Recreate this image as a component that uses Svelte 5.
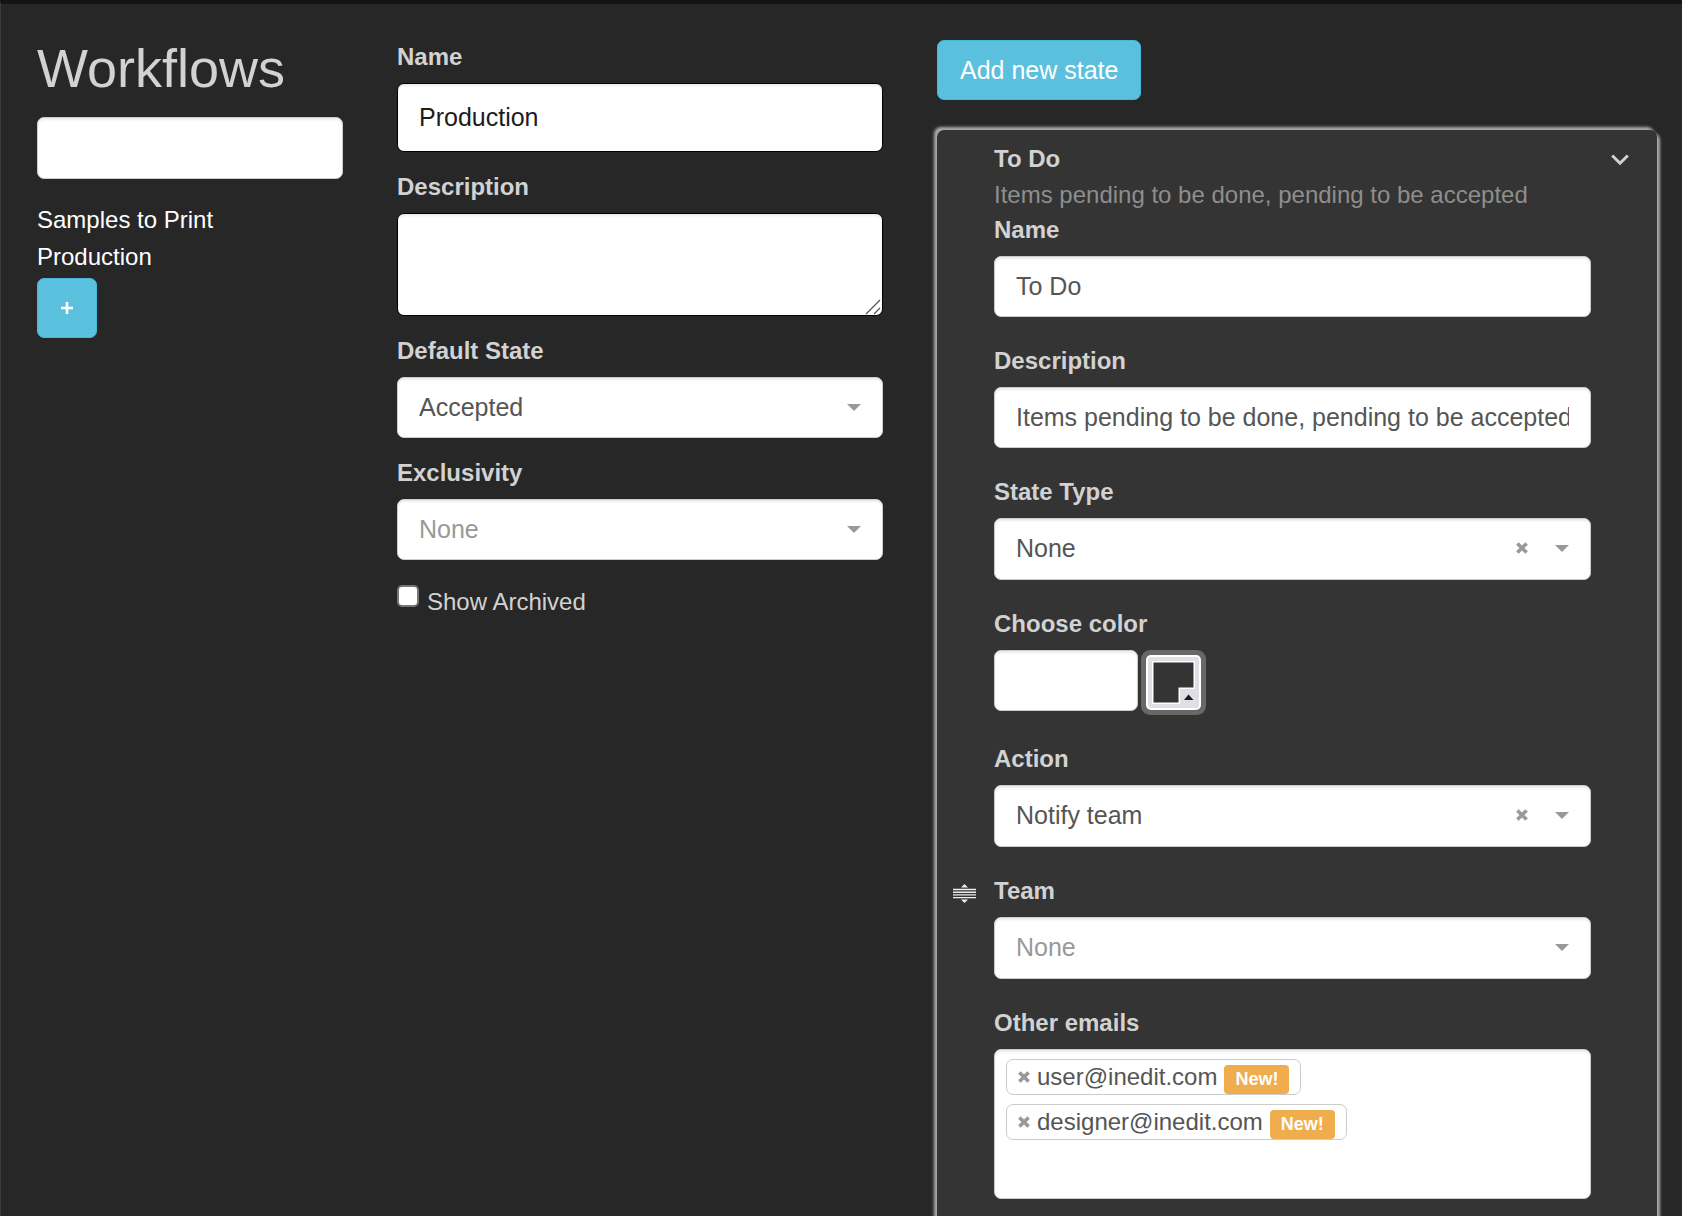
<script>
  let search = $state('');
  let workflows = ['Samples to Print', 'Production'];

  let workflow = $state({
    name: 'Production',
    description: '',
    defaultState: 'Accepted',
    exclusivity: '',
    showArchived: false
  });

  let item = $state({
    open: true,
    name: 'To Do',
    description: 'Items pending to be done, pending to be accepted',
    type: 'None',
    color: '',
    action: 'Notify team',
    team: '',
    emails: ['user@inedit.com', 'designer@inedit.com']
  });

  function removeEmail(email) {
    item.emails = item.emails.filter((e) => e !== email);
  }
</script>

{#snippet cross()}
  <svg class="cross" viewBox="0 0 12 12" aria-hidden="true">
    <path d="M1.400 1.400L10.600 10.600M10.600 1.400L1.400 10.600" stroke="currentColor" stroke-width="3.6" />
  </svg>
{/snippet}

{#snippet caret()}
  <svg class="caret" viewBox="0 0 14 7" aria-hidden="true">
    <path d="M0 0H14L7 7Z" fill="currentColor" />
  </svg>
{/snippet}

<div class="page">
  <aside>
    <h1>Workflows</h1>
    <input class="control" type="text" aria-label="Search workflows" bind:value={search} />
    <ul class="list">
      {#each workflows as name}
        <li><a href="#workflow">{name}</a></li>
      {/each}
    </ul>
    <button class="btn btn-add" aria-label="Add workflow">
      <svg viewBox="0 0 14 14" aria-hidden="true">
        <path d="M7 1V13M1 7H13" stroke="currentColor" stroke-width="2.6" />
      </svg>
    </button>
  </aside>

  <section class="workflow">
    <div class="field">
      <label for="wf-name">Name</label>
      <input id="wf-name" class="control dark" type="text" bind:value={workflow.name} />
    </div>
    <div class="field">
      <label for="wf-desc">Description</label>
      <div class="area">
        <textarea id="wf-desc" class="control dark" bind:value={workflow.description}></textarea>
        <svg class="grip" viewBox="0 0 16 16" aria-hidden="true">
          <path d="M1 15L15 1M9 15L15 9" stroke="#555" stroke-width="1.3" />
        </svg>
      </div>
    </div>
    <div class="field">
      <label for="wf-default">Default State</label>
      <div class="select">
        <select id="wf-default" class="control" bind:value={workflow.defaultState}>
          <option>Accepted</option>
          <option>To Do</option>
        </select>
        {@render caret()}
      </div>
    </div>
    <div class="field">
      <label for="wf-excl">Exclusivity</label>
      <div class="select">
        <select id="wf-excl" class="control" class:empty={!workflow.exclusivity} bind:value={workflow.exclusivity}>
          <option value="">None</option>
        </select>
        {@render caret()}
      </div>
    </div>
    <label class="check">
      <input type="checkbox" bind:checked={workflow.showArchived} />
      <span>Show Archived</span>
    </label>
  </section>

  <section class="states">
    <button class="btn">Add new state</button>

    <article class="panel">
      <div class="handle" title="Drag to reorder">
        <svg viewBox="0 0 23 19" aria-hidden="true">
          <path d="M11.5 0L15 3.400H8ZM11.5 19L15 15.600H8Z" fill="#eee" />
          <path d="M0 5.500H23M0 8.200H23M0 10.900H23M0 13.600H23" stroke="#eee" stroke-width="1.4" />
        </svg>
      </div>

      <div class="body">
        <header>
          <div>
            <strong>{item.name}</strong>
            <p>{item.description}</p>
          </div>
          <button class="toggle" aria-label="Toggle state" aria-expanded={item.open} onclick={() => (item.open = !item.open)}>
            <svg viewBox="0 0 18 12" aria-hidden="true">
              <path d="M1.2 1.5L9 9.2L16.8 1.5" fill="none" stroke="currentColor" stroke-width="3" />
            </svg>
          </button>
        </header>

        {#if item.open}
          <div class="fields">
            <div class="field">
              <label for="st-name">Name</label>
              <input id="st-name" class="control" type="text" bind:value={item.name} />
            </div>
            <div class="field">
              <label for="st-desc">Description</label>
              <input id="st-desc" class="control" type="text" bind:value={item.description} />
            </div>
            <div class="field">
              <label for="st-type">State Type</label>
              <div class="select">
                <select id="st-type" class="control" bind:value={item.type}>
                  <option>None</option>
                </select>
                <button class="clear" aria-label="Clear state type">{@render cross()}</button>
                {@render caret()}
              </div>
            </div>
            <div class="field">
              <label for="st-color">Choose color</label>
              <div class="color">
                <input id="st-color" class="control" type="text" bind:value={item.color} />
                <button class="swatch" aria-label="Open color picker">
                  <svg viewBox="0 0 65 65" aria-hidden="true">
                    <rect width="65" height="65" rx="9" fill="#686868" />
                    <rect x="5" y="5" width="55" height="55" rx="5" fill="#fff" />
                    <rect x="7" y="7" width="51" height="51" rx="3" fill="#dfdfe6" />
                    <path d="M11 11H54V54H11Z" fill="#fff" />
                    <path d="M12.500 12.500H52.500V37.500H37.500V52.500H12.500Z" fill="#343434" />
                    <path d="M39 39H54V54H39Z" fill="#dfdfe6" />
                    <path d="M47.500 44.500L52.500 50H43Z" fill="#1c1c22" />
                  </svg>
                </button>
              </div>
            </div>
            <div class="field">
              <label for="st-action">Action</label>
              <div class="select">
                <select id="st-action" class="control" bind:value={item.action}>
                  <option>Notify team</option>
                </select>
                <button class="clear" aria-label="Clear action">{@render cross()}</button>
                {@render caret()}
              </div>
            </div>
            <div class="field">
              <label for="st-team">Team</label>
              <div class="select">
                <select id="st-team" class="control" class:empty={!item.team} bind:value={item.team}>
                  <option value="">None</option>
                </select>
                {@render caret()}
              </div>
            </div>
            <div class="field">
              <label for="st-emails">Other emails</label>
              <div class="control tags">
                {#each item.emails as email}
                  <span class="tag">
                    <button aria-label="Remove {email}" onclick={() => removeEmail(email)}>{@render cross()}</button>
                    {email}
                    <b>New!</b>
                  </span>
                {/each}
                <input id="st-emails" type="email" />
              </div>
            </div>
          </div>
        {/if}
      </div>
    </article>
  </section>
</div>

<style>
  :global(body) {
    background: #272727;
  }

  .page {
    box-sizing: border-box;
    min-height: 100vh;
    display: grid;
    grid-template-columns: 17fr 27fr 40fr;
    gap: 54px;
    padding: 36px 25px 0 36px;
    border-top: 4px solid #141414;
    border-left: 1px solid #3c3c3c;
    color: #d2d2d2;
    font: 24px/34px "Liberation Sans", Arial, sans-serif;
    overflow: hidden;
  }

  .page > * { min-width: 0; }

  h1 {
    margin: 0 0 20px;
    font-size: 54px;
    font-weight: 500;
    line-height: 57px;
  }

  button {
    padding: 0;
    border: 0;
    background: none;
    color: inherit;
    font: inherit;
    cursor: pointer;
  }

  svg { display: block; }

  .control {
    box-sizing: border-box;
    display: block;
    width: 100%;
    height: 62px;
    margin: 0;
    padding: 0 21px;
    border: 1px solid #ccc;
    border-radius: 7px;
    background: #fff;
    box-shadow: inset 0 2px 2px rgba(0, 0, 0, 0.075);
    color: #555;
    font: 25px/36px "Liberation Sans", Arial, sans-serif;
  }
  input.control { height: 61px; }
  aside input.control { height: 62px; }
  .dark { border-color: #000; color: #1c1c1c; }
  input.control.dark { height: 69px; }

  .area { position: relative; }
  textarea.control { height: 103px; padding: 10px 21px; resize: vertical; }
  textarea::-webkit-resizer { display: none; }
  .grip {
    position: absolute;
    right: 2px;
    bottom: 1px;
    width: 16px;
    height: 16px;
    pointer-events: none;
  }

  .list {
    margin: 22px 0 3px;
    padding: 0;
    list-style: none;
    line-height: 37px;
  }
  .list a { color: #fff; text-decoration: none; }

  .btn {
    height: 60px;
    padding: 0 22px;
    border: 1px solid #46b8da;
    border-radius: 7px;
    background: #5bc0de;
    color: #fff;
    font-size: 25px;
  }
  .btn-add {
    display: grid;
    place-items: center;
    width: 60px;
    padding: 0;
  }
  .btn-add svg { width: 14px; height: 14px; }

  .field label {
    display: block;
    margin-bottom: 9px;
    font-weight: 700;
  }
  .workflow .field { margin-bottom: 18px; }
  .panel .field { margin-bottom: 27px; }

  .select { position: relative; }
  select.control { appearance: none; padding-bottom: 2px; }
  .workflow select.control { height: 61px; }
  select.empty { color: #999; }
  .select .caret {
    position: absolute;
    top: 27px;
    right: 22px;
    width: 14px;
    height: 7px;
    color: #999;
    pointer-events: none;
  }
  .clear {
    position: absolute;
    top: 24px;
    right: 63px;
    color: #999;
  }
  .cross { width: 12px; height: 12px; }

  .check {
    display: flex;
    align-items: flex-start;
    gap: 8px;
    padding-top: 7px;
  }
  .check input {
    appearance: none;
    box-sizing: border-box;
    width: 22px;
    height: 22px;
    margin: 0;
    border: 2px solid #767676;
    border-radius: 5px;
    background: #fff;
  }
  .check input:checked { background: #5bc0de; }

  .panel {
    display: grid;
    grid-template-columns: 57px 1fr;
    margin-top: 30px;
    padding: 11px 0 40px;
    border-radius: 7px;
    background: #343434;
    box-shadow: 3px 3px 3px #aaa, -3px -3px 3px #aaa;
  }
  .handle {
    padding: 743px 0 0 16px;
    cursor: move;
  }
  .handle svg { width: 23px; height: 19px; }
  .body { min-width: 0; }

  header {
    display: flex;
    justify-content: space-between;
    padding-right: 28px;
    line-height: 36px;
  }
  header strong { display: block; }
  header p { margin: 0; color: #8e8e8e; }
  .toggle { align-self: flex-start; padding-top: 13px; }
  .toggle svg { width: 18px; height: 12px; }
  .fields { padding-right: 66px; }

  .color { display: flex; gap: 3px; }
  .color .control { width: 144px; }
  .swatch, .swatch svg { width: 65px; height: 65px; }

  .tags {
    display: flex;
    flex-direction: column;
    align-items: flex-start;
    gap: 9px;
    height: auto;
    min-height: 150px;
    padding: 9px 11px;
  }
  .tag {
    box-sizing: border-box;
    display: flex;
    align-items: center;
    gap: 7px;
    height: 36px;
    padding: 0 11px;
    border: 1px solid #ccc;
    border-radius: 7px;
    font-size: 24px;
    line-height: 34px;
  }
  .tag button { color: #999; }
  .tag b {
    align-self: flex-end;
    padding: 0 11px;
    border-radius: 4px;
    background: #f0ad4e;
    color: #fff;
    font-size: 18px;
    line-height: 29px;
  }
  .tags input {
    width: 100%;
    height: 36px;
    padding: 0;
    border: 0;
    outline: 0;
    background: none;
    font: inherit;
  }
</style>
